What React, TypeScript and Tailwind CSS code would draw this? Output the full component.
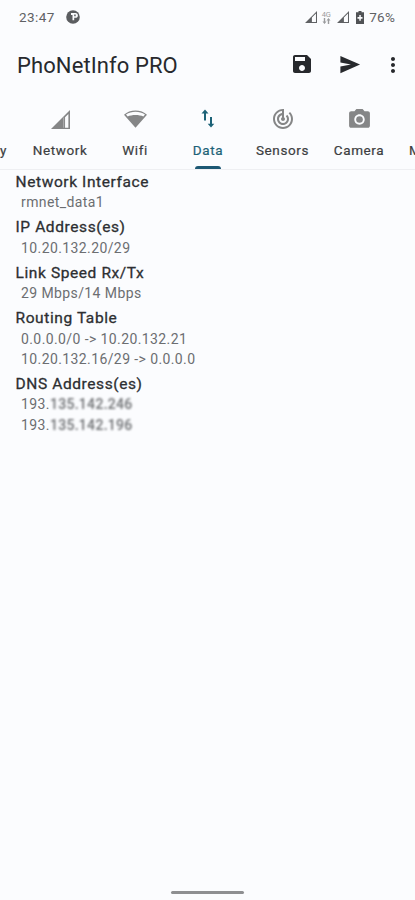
import type { ReactNode } from 'react';

const SignalIcon = ({ className }: { className: string }) => (
  <svg viewBox="0 0 20 20" className={className} fill="currentColor">
    <path fillRule="evenodd" d="M20 0v20H0zM18.300 4.200L11.500 11v7.400h6.800z" />
  </svg>
);

const CellularIcon = () => (
  <svg viewBox="0 0 20 20" className="h-[19px] w-[19px]" fill="currentColor">
    <path fillRule="evenodd" d="M20 0v20H0zM18.300 4.200L14.800 7.700V18.600h3.500z" />
    <path d="M12.800 8h1v10.600h-1z" fill="#ffffff" opacity=".35" />
  </svg>
);

const WifiIcon = () => (
  <svg viewBox="0 0 24 18" className="h-[18px] w-[23px]" fill="currentColor">
    <path fillRule="evenodd" d="M12 18L0 4.500C3 1.500 7.300 0 12 0s9 1.500 12 4.500zM2.100 4.400l1.700 1.900C6 5.500 9 4.900 12 4.900s6 .6 8.200 1.400l1.700-1.900C19 2.500 15.600 1.500 12 1.500s-7 1-9.900 2.900z" />
  </svg>
);

const DataIcon = () => (
  <svg viewBox="0 0 14 20" className="h-5 w-[14px]" fill="currentColor">
    <path d="M4 0.500L7.500 4.500H5V11.500H3V4.500H0.500zM10 18.500L6.700 14.800H9V8h2v6.800h2.300z" />
  </svg>
);

const SensorsIcon = () => (
  <svg viewBox="0 0 24 24" className="h-6 w-6" fill="currentColor">
    <path d="M19.070 4.930l-1.410 1.410C19.100 7.790 20 9.790 20 12c0 4.420-3.580 8-8 8s-8-3.580-8-8c0-4.080 3.050-7.440 7-7.930v2.020C8.160 6.570 6 9.030 6 12c0 3.310 2.690 6 6 6s6-2.690 6-6c0-1.660-.67-3.160-1.760-4.240l-1.410 1.410C15.550 9.900 16 10.900 16 12c0 2.210-1.790 4-4 4s-4-1.790-4-4c0-1.860 1.280-3.410 3-3.860v2.140c-.6.35-1 .98-1 1.720 0 1.100.9 2 2 2s2-.9 2-2c0-.74-.4-1.380-1-1.720V2h-1C6.480 2 2 6.480 2 12s4.480 10 10 10 10-4.480 10-10c0-2.760-1.120-5.260-2.930-7.070z" />
  </svg>
);

const CameraIcon = () => (
  <svg viewBox="0 0 24 24" className="h-[25px] w-[25px]" fill="currentColor">
    <circle cx="12" cy="12" r="3.200" />
    <path d="M9 2L7.170 4H4c-1.100 0-2 .9-2 2v12c0 1.100.9 2 2 2h16c1.100 0 2-.9 2-2V6c0-1.100-.9-2-2-2h-3.170L15 2H9zm3 15c-2.760 0-5-2.240-5-5s2.240-5 5-5 5 2.240 5 5-2.240 5-5 5z" />
  </svg>
);

type TabProps = { width: string; label: string; icon: ReactNode; active?: boolean };

const Tab = ({ width, label, icon, active }: TabProps) => (
  <div className={`flex h-full shrink-0 flex-col items-center ${width} ${active ? 'text-[#1c6277]' : 'text-[#858687]'}`}>
    <div className="flex h-[46px] w-full items-center justify-center">{icon}</div>
    <div className={`-mt-[1px] text-[13.5px] leading-[18px] tracking-[0.6px] [-webkit-text-stroke:0.2px] ${active ? '' : 'text-[#3c3e41]'}`}>{label}</div>
    {active && <div className="mt-auto h-[3px] w-[26px] rounded-t-[3px] bg-[#1c5874]" />}
  </div>
);

type Section = { title: string; values: { text: string; hidden?: string }[] };

const sections: Section[] = [
  { title: 'Network Interface', values: [{ text: 'rmnet_data1' }] },
  { title: 'IP Address(es)', values: [{ text: '10.20.132.20/29' }] },
  { title: 'Link Speed Rx/Tx', values: [{ text: '29 Mbps/14 Mbps' }] },
  { title: 'Routing Table', values: [{ text: '0.0.0.0/0 -> 10.20.132.21' }, { text: '10.20.132.16/29 -> 0.0.0.0' }] },
  {
    title: 'DNS Address(es)',
    values: [
      { text: '193.', hidden: '135.142.246' },
      { text: '193.', hidden: '135.142.196' },
    ],
  },
];

export default function App() {
  return (
    <div className="flex h-[900px] w-[415px] flex-col overflow-hidden bg-[#fbfcfe] font-[Roboto,sans-serif]">
      <div className="flex h-[34px] shrink-0 items-center pr-[20px] pl-[19px] text-[#5f6164]">
        <span className="text-[13.5px] tracking-[0.4px]">23:47</span>
        <svg viewBox="0 0 14 14" className="ml-[11px] h-[14px] w-[14px]">
          <circle cx="7" cy="7" r="6.800" fill="#5b5d60" />
          <path d="M5 3h4.500c1.500 0 2.400 1 2.400 2.400S11 7.800 9.500 7.800H8.200v2.400H6.500V5H5z" fill="#fbfcfe" />
          <path d="M8.200 4.600h1.500v1.700H8.200z" fill="#5b5d60" />
        </svg>
        <div className="ml-auto flex items-center">
          <SignalIcon className="h-3 w-3" />
          <div className="ml-[4px] flex w-[10px] flex-col items-center text-[#9a9b9d]">
            <span className="text-[7.5px] leading-[7px]">4G</span>
            <svg viewBox="0 0 9 6" className="h-[6px] w-[9px]" fill="currentColor">
              <path d="M2.500 6L.5 3.500h1.300V0h1.400v3.500h1.300zM6.500 0l2 2.500H7.200V6H5.800V2.500H4.500z" />
            </svg>
          </div>
          <SignalIcon className="ml-[6px] h-3 w-3" />
          <svg viewBox="0 0 8 13" className="ml-[7px] h-[13px] w-2" fill="#505255">
            <path fillRule="evenodd" d="M2.500 0h3v1.300H8V13H0V1.300h2.500zM3.300 4v2H1.500v1.700h1.800v2h1.500v-2h1.700V6H4.800V4z" />
          </svg>
          <span className="ml-[5px] text-[13.5px] tracking-[0.2px]">76%</span>
        </div>
      </div>

      <div className="flex h-[62px] shrink-0 items-center pr-[10px] pl-[17px] text-[#27292d]">
        <h1 className="mt-[2px] text-[22px] leading-[28px] font-normal tracking-[0.1px]">PhoNetInfo PRO</h1>
        <svg viewBox="0 0 24 24" className="-mt-[2px] ml-auto h-6 w-6" fill="currentColor">
          <path d="M17 3H5c-1.110 0-2 .9-2 2v14c0 1.100.89 2 2 2h14c1.100 0 2-.9 2-2V7l-4-4zm-5 16c-1.660 0-3-1.340-3-3s1.340-3 3-3 3 1.340 3 3-1.340 3-3 3zm3-10H5V5h10v4z" />
        </svg>
        <svg viewBox="0 0 24 24" className="-mt-[2px] ml-6 h-[23px] w-[23px]" fill="currentColor">
          <path d="M2.500 3L23 12 2.500 21V14L13.500 12 2.500 10z" />
        </svg>
        <svg viewBox="0 0 24 24" className="-mt-[1px] ml-[20px] h-6 w-6" fill="currentColor">
          <path d="M12 8c1.100 0 2-.9 2-2s-.9-2-2-2-2 .9-2 2 .9 2 2 2zm0 2c-1.100 0-2 .9-2 2s.9 2 2 2 2-.9 2-2-.9-2-2-2zm0 6c-1.100 0-2 .9-2 2s.9 2 2 2 2-.9 2-2-.9-2-2-2z" />
        </svg>
      </div>

      <div className="flex h-[74px] shrink-0 overflow-hidden border-b border-[#eeeff2]">
        <div className="flex w-[22px] shrink-0 items-end pb-[10px]">
          <span className="text-[13.5px] leading-[18px] text-[#3c3e41] [-webkit-text-stroke:0.2px]">y</span>
        </div>
        <Tab width="w-[76px]" label="Network" icon={<CellularIcon />} />
        <Tab width="w-[74px]" label="Wifi" icon={<WifiIcon />} />
        <Tab width="w-[72px]" label="Data" active icon={<DataIcon />} />
        <Tab width="w-[77px]" label="Sensors" icon={<SensorsIcon />} />
        <Tab width="w-[76px]" label="Camera" icon={<CameraIcon />} />
        <div className="flex shrink-0 items-end pb-[10px] pl-[12px]">
          <span className="text-[13.5px] leading-[18px] text-[#3c3e41] [-webkit-text-stroke:0.2px]">M</span>
        </div>
      </div>

      <main className="flex flex-1 flex-col gap-[4.400px] pt-[1.900px] pl-[15.500px]">
        {sections.map((s) => (
          <section key={s.title}>
            <h2 className="text-[15.5px] leading-[20.500px] font-normal tracking-[0.6px] text-[#2d2f32] [-webkit-text-stroke:0.3px]">{s.title}</h2>
            {s.values.map((v) => (
              <p key={v.text + v.hidden} className="pl-[5.500px] text-[14px] leading-[20.500px] tracking-[0.4px] text-[#6c6e71]">
                {v.text}
                {v.hidden && <span className="font-medium tracking-[0.3px] blur-[1.300px]">{v.hidden}</span>}
              </p>
            ))}
          </section>
        ))}
      </main>

      <div className="flex h-[9px] shrink-0 justify-center">
        <div className="h-[3px] w-[73px] rounded-full bg-[#8e8f91]" />
      </div>
    </div>
  );
}
